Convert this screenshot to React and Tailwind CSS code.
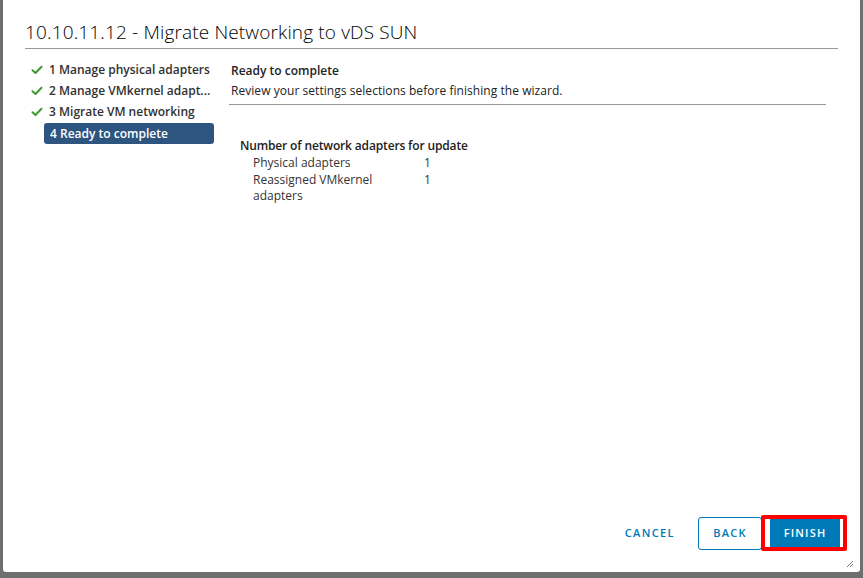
import React from "react";

const Check = () => (
  <svg width="12" height="10" viewBox="0 0 12 10" className="shrink-0">
    <path d="M1.5 5.2 L4.5 8 L10.5 1.8" fill="none" stroke="#3c9a2f" strokeWidth="2" strokeLinecap="round" strokeLinejoin="round" />
  </svg>
);

export default function App() {
  const font = { fontFamily: '"Open Sans", "Liberation Sans", sans-serif' };
  return (
    <div className="w-[863px] h-[578px] bg-[#6f6f6f] overflow-hidden pl-[3px] pr-[3px] pb-[6px]" style={font}>
      <div className="relative w-full h-full bg-white rounded-b-[3px] flex flex-col">
        <div className="pl-[22px] pr-[22px] pt-[19px]">
          <h1 className="text-[19px] leading-[27px] font-light text-[#000] tracking-[0.15px] pb-[2px] border-b border-[#9a9a9a]">
            10.10.11.12 - Migrate Networking to vDS SUN
          </h1>
        </div>
        <div className="flex flex-1 pt-[12px]">
          <div className="w-[211px] shrink-0 pl-[28px] -mt-[2px] flex flex-col text-[12px] font-semibold text-[#313131]">
            <div className="flex items-center gap-[6px] h-[21px]"><Check /><span>1 Manage physical adapters</span></div>
            <div className="flex items-center gap-[6px] h-[21px]"><Check /><span>2 Manage VMkernel adapt...</span></div>
            <div className="flex items-center gap-[6px] h-[21px]"><Check /><span>3 Migrate VM networking</span></div>
            <div className="ml-[13px] mt-[1px] h-[21px] rounded-[3px] bg-[#2e5580] text-white flex items-center pl-[6px]">4 Ready to complete</div>
          </div>
          <div className="flex-1 pl-[15px] pr-[34px]">
            <div className="border-b border-[#9a9a9a] pb-[3px] pl-[2px]">
              <div className="text-[12px] font-semibold text-[#222] leading-[20px]">Ready to complete</div>
              <div className="text-[12px] text-[#222] leading-[20px] tracking-[0.05px]">Review your settings selections before finishing the wizard.</div>
            </div>
            <div className="pl-[11px] pt-[33px] text-[12px] text-[#333]">
              <div className="font-semibold text-[#222] leading-[16px] tracking-[-0.15px]">Number of network adapters for update</div>
              <div className="pl-[13px] pt-[1px]">
                <div className="flex leading-[16.5px]"><span className="w-[171px]">Physical adapters</span><span>1</span></div>
                <div className="flex leading-[16.5px]"><span className="w-[171px]">Reassigned VMkernel<br />adapters</span><span>1</span></div>
              </div>
            </div>
          </div>
        </div>
        <div className="flex items-center justify-end pr-[20px] pb-[22px] gap-[8px]">
          <button className="h-[33px] pl-[22px] pr-[15px] text-[11px] font-semibold tracking-[1.4px] text-[#0079b8]">CANCEL</button>
          <button className="h-[33px] w-[64px] border border-[#0079b8] rounded-[3px] text-[11px] font-semibold tracking-[1.2px] text-[#0079b8]">BACK</button>
          <div className="relative">
            <button className="h-[33px] w-[70px] bg-[#0079b8] rounded-[3px] text-[11px] font-semibold tracking-[1.2px] text-white">FINISH</button>
            <div className="absolute left-[-9px] right-[-7px] top-[-2px] bottom-[-1px] border-[4px] border-[#ff0000] rounded-[2px] pointer-events-none" />
          </div>
        </div>
        <svg className="absolute right-[6px] bottom-[4px]" width="8" height="8" viewBox="0 0 8 8">
          <path d="M7 1 L1 7 M7 4 L4 7 M7 6.5 L6.5 7" stroke="#777" strokeWidth="1" />
        </svg>
      </div>
    </div>
  );
}
